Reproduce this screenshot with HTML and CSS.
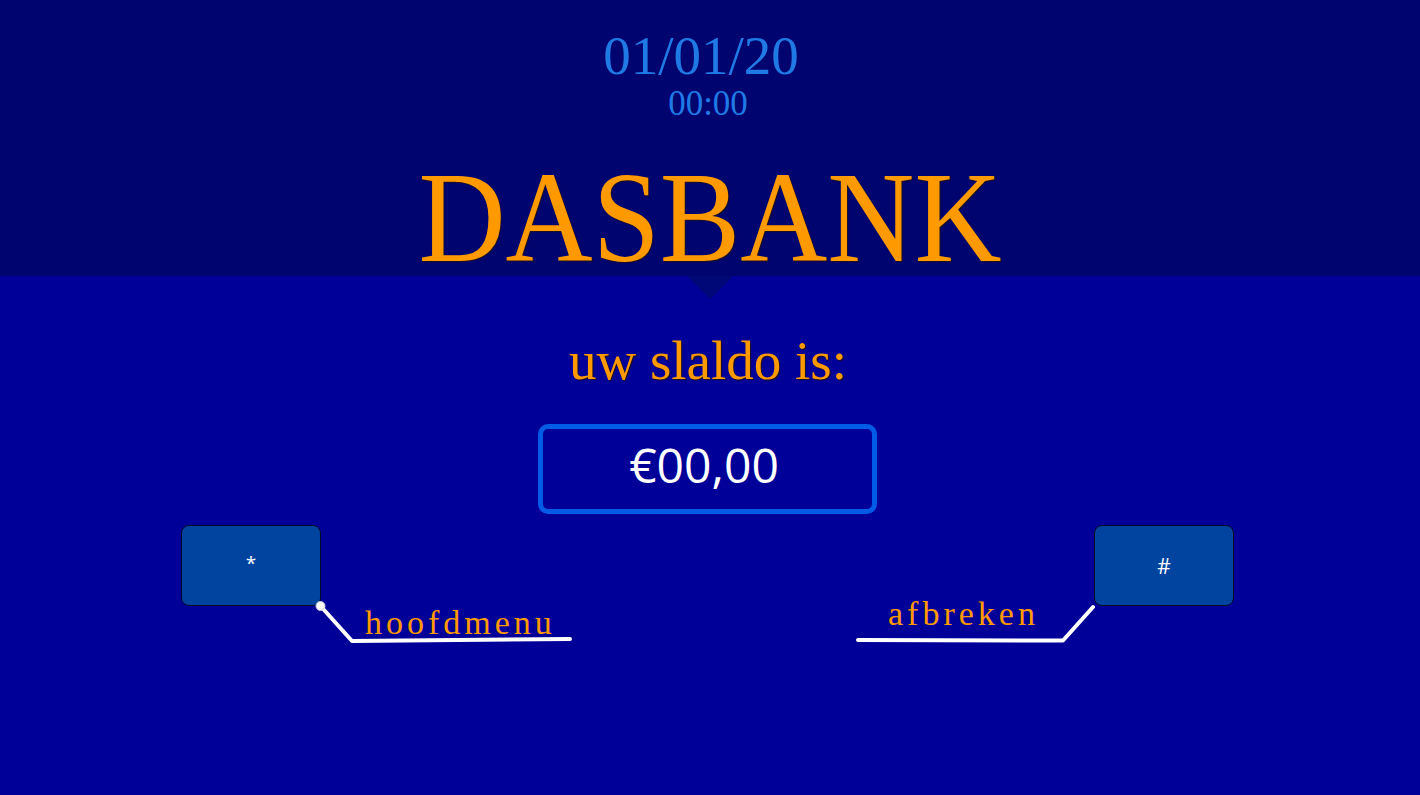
FILE: index.html
```html
<!DOCTYPE html>
<html lang="nl">
<head>
<meta charset="utf-8">
<title>DASBANK</title>
<link rel="stylesheet" href="styles.css">
</head>
<body>
<header class="top">
  <div class="date">01/01/20</div>
  <div class="time">00:00</div>
  <h1 class="brand">DASBANK</h1>
</header>
<main class="screen">
  <p class="prompt">uw slaldo is:</p>
  <div class="balance">€00,00</div>
  <div class="keys">
    <div class="key-group key-left">
      <div class="key"><span class="key-star">*</span></div>
      <div class="key-label label-left">hoofdmenu</div>
    </div>
    <div class="key-group key-right">
      <div class="key">#</div>
      <div class="key-label label-right">afbreken</div>
    </div>
    <svg class="connectors" width="1420" height="130" viewBox="0 525 1420 130" aria-hidden="true">
      <polyline points="320.5,606 352,641 570,639" fill="none" stroke="#ffffff" stroke-width="4" stroke-linecap="round" stroke-linejoin="round"/>
      <circle cx="320.5" cy="606" r="4.5" fill="#ffffff" stroke="#c8c8d8" stroke-width="1"/>
      <polyline points="1093,607 1063,640.5 858,640" fill="none" stroke="#ffffff" stroke-width="4" stroke-linecap="round" stroke-linejoin="round"/>
    </svg>
  </div>
</main>
</body>
</html>
```

FILE: styles.css
```css
* { box-sizing: border-box; }

html, body {
  margin: 0;
  padding: 0;
  width: 1420px;
  height: 795px;
  overflow: hidden;
}

body {
  background: #000099;
  font-family: "Liberation Serif", "Times New Roman", serif;
}

.top {
  position: relative;
  height: 276px;
  background: #00046f;
  padding-top: 28px;
  text-align: center;
}

.top::after {
  content: "";
  position: absolute;
  left: 50%;
  top: 100%;
  margin-left: -23px;
  border-top: 23px solid #000877;
  border-left: 23px solid transparent;
  border-right: 23px solid transparent;
}

.date {
  font-size: 55px;
  line-height: 56px;
  padding-right: 18px;
  color: #1f7ae6;
}

.time {
  font-size: 35px;
  line-height: 40px;
  padding-right: 4px;
  color: #1f7ae6;
}

.brand {
  margin: 28px 0 0;
  font-weight: normal;
  font-size: 130px;
  line-height: 130px;
  color: #ff9900;
  transform: scaleX(0.928);
  text-shadow: 1px 1px 1px rgba(40, 20, 0, 0.7);
}

.screen {
  display: flex;
  flex-direction: column;
  align-items: center;
}

.prompt {
  margin: 55px 0 0;
  padding-right: 4px;
  font-size: 55px;
  line-height: 60px;
  color: #ff9900;
  text-shadow: 1px 1px 1px rgba(40, 20, 0, 0.8);
}

.balance {
  margin-top: 33px;
  margin-right: 6px;
  width: 339px;
  height: 90px;
  border: 5px solid #005be6;
  border-radius: 10px;
  padding-top: 12px;
  padding-right: 6px;
  text-align: center;
  font-family: "Open Sans", "Noto Sans", sans-serif;
  font-size: 48px;
  line-height: 47px;
  color: #ffffff;
}

.keys {
  position: relative;
  align-self: stretch;
  display: flex;
  justify-content: space-between;
  margin-top: 11px;
  padding: 0 186px 0 181px;
  height: 130px;
}

.key-group {
  width: 140px;
}

.key {
  width: 140px;
  height: 81px;
  background: #0044a0;
  border: 1px solid #000a26;
  border-radius: 8px;
  display: flex;
  align-items: center;
  justify-content: center;
  font-family: "Open Sans", "Noto Sans", sans-serif;
  font-size: 21px;
  color: #ffffff;
}

.key-star {
  font-size: 19px;
  margin-top: -6px;
}

.key-label {
  white-space: nowrap;
  font-size: 34px;
  line-height: 34px;
  letter-spacing: 4px;
  color: #ff9900;
}

.label-left {
  margin-left: 184px;
}

.label-right {
  margin-left: -206px;
  margin-top: -9px;
}

.connectors {
  position: absolute;
  left: 0;
  top: 0;
  pointer-events: none;
}
```
